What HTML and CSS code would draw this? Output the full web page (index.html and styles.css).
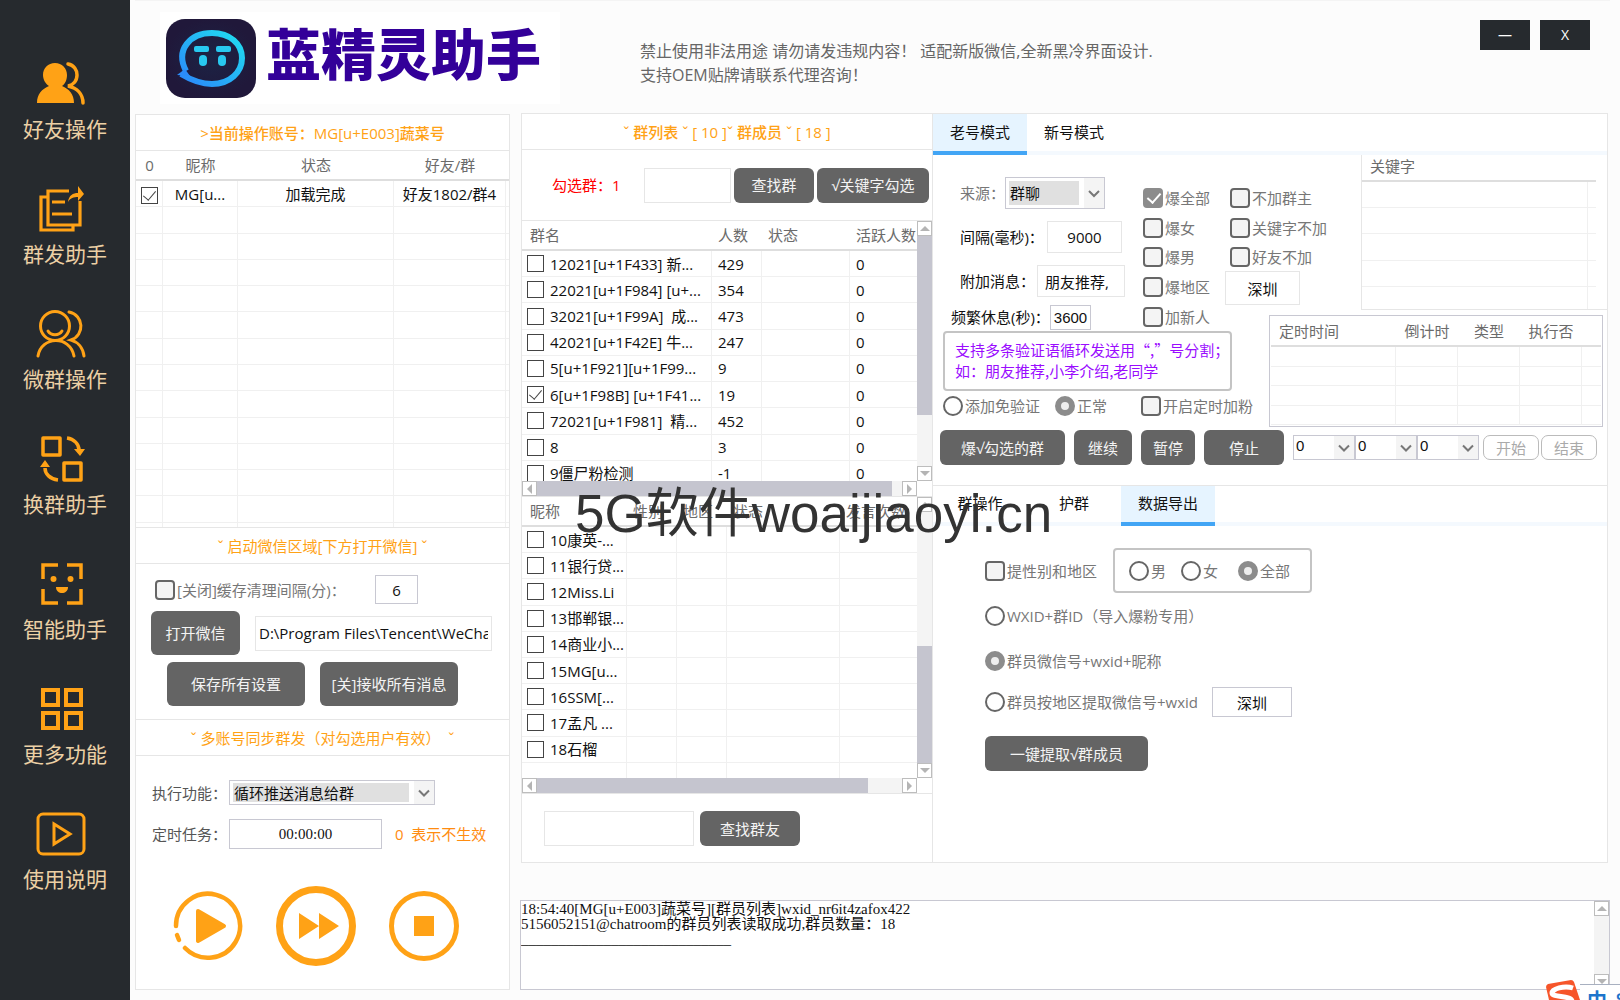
FILE: index.html
```html
<!DOCTYPE html>
<html lang="zh-CN">
<head>
<meta charset="utf-8">
<title>蓝精灵助手</title>
<link rel="stylesheet" href="styles.css">
</head>
<body>
<div class="app">
  <nav class="sidebar">
    <a href="#friends" class="nav-item">
      <svg viewBox="0 0 50 50"><g fill="#ffa216"><path d="M19 4c7 0 12 5 12 12 0 5-2 9-5 11 7 3 12 8 12 17H1c0-9 5-14 12-17-3-2-6-6-6-11C7 9 12 4 19 4z"/></g><path d="M32 5c6 1 9 6 9 11 0 6-4 10-9 11 9 2 15 8 15 17" fill="none" stroke="#ffa216" stroke-width="3.5" stroke-linecap="round"/></svg>
      <span>好友操作</span></a>
    <a href="#mass" class="nav-item">
      <svg viewBox="0 0 50 50" fill="none" stroke="#ffa216" stroke-width="3.2"><path d="M33 7H12v34h32V17M12 13H5v33h32v-5M16 18h13M16 30h20"/><path d="M32 18c1-7 5-9 10-9V2l6 8-6 7v-4c-4 0-8 1-10 5z" fill="#ffa216" stroke="none"/></svg>
      <span>群发助手</span></a>
    <a href="#groups" class="nav-item">
      <svg viewBox="0 0 50 50" fill="none" stroke="#ffa216" stroke-width="3" stroke-linecap="round"><circle cx="19" cy="17" r="14.500"/><path d="M12 22c3 5 11 5 14 0M2 47c3-20 32-21 36 0M33 3c15 3 16 23 2 28 7 2 12 8 13 16"/></svg>
      <span>微群操作</span></a>
    <a href="#swap" class="nav-item">
      <svg viewBox="0 0 50 50" fill="none" stroke="#ffa216" stroke-width="3.500" stroke-linejoin="round"><rect x="7" y="4" width="17" height="17"/><rect x="28" y="29" width="17" height="17"/><path d="M31 4c7 1 12 6 12 12M22 46C14 45 9 40 9 34"/><path d="M38 15h11l-5 7zM4 33h10l-5-7z" fill="#ffa216" stroke="none"/></svg>
      <span>换群助手</span></a>
    <a href="#smart" class="nav-item">
      <svg viewBox="0 0 50 50" fill="none" stroke="#ffa216" stroke-width="3.500"><path d="M22 6H7v14M31 6h14v14M7 30v14h15M45 30v14H31"/><g fill="#ffa216" stroke="none"><circle cx="17.500" cy="20" r="3"/><circle cx="34.500" cy="20" r="3"/><path d="M20 28h12c0 8-12 8-12 0z"/></g></svg>
      <span>智能助手</span></a>
    <a href="#more" class="nav-item">
      <svg viewBox="0 0 50 50" fill="none" stroke="#ffa216" stroke-width="4"><path d="M7 6h15v15H7zM30 6h15v15H30zM7 29h15v15H7zM30 29h15v15H30z"/></svg>
      <span>更多功能</span></a>
    <a href="#help" class="nav-item">
      <svg viewBox="0 0 50 50" fill="none" stroke="#ffa216" stroke-width="3"><rect x="2" y="5" width="46" height="40" rx="5"/><path d="M18 15v20l16-10z"/></svg>
      <span>使用说明</span></a>
  </nav>

  <main class="main">
    <header class="topbar">
      <div class="brand">
        <svg viewBox="0 0 90 79" width="90" height="79">
          <defs><linearGradient id="g" x1="0" y1="1" x2="1" y2="0"><stop offset="0" stop-color="#2b86fb"/><stop offset="1" stop-color="#20dff0"/></linearGradient>
          <radialGradient id="b"><stop offset="0" stop-color="#1c2345"/><stop offset="1" stop-color="#20183a"/></radialGradient></defs>
          <rect width="90" height="79" rx="19" fill="url(#b)"/>
          <path d="M20 52C9 31 24 14 46 14c18 0 30 11 30 25S64 65 46 65c-12 0-21-4-31-10" fill="none" stroke="url(#g)" stroke-width="6"/>
          <path d="M11 56l8-6 5 7z" fill="#2b8cfa"/>
          <g fill="#28c8f0"><rect x="28" y="27" width="15" height="6" rx="2"/><rect x="50" y="27" width="15" height="6" rx="2"/><rect x="33" y="36" width="8" height="11" rx="4"/><rect x="52" y="36" width="8" height="11" rx="4"/></g>
        </svg>
        <h1>蓝精灵助手</h1>
      </div>
      <p class="notice">禁止使用非法用途 请勿请发违规内容！ 适配新版微信,全新黑冷界面设计.<br>支持OEM贴牌请联系代理咨询！</p>
      <div class="win-buttons"><button aria-label="最小化">—</button><button aria-label="关闭">X</button></div>
    </header>

    <div class="content">
      <section class="account">
        <h2 class="strong">&gt;当前操作账号：MG[u+E003]蔬菜号</h2>
        <div class="grid-wrap">
          <table class="list accounts">
            <colgroup><col class="w27"><col class="w75"><col class="w156"><col class="w112"><col></colgroup>
            <thead><tr><th>0</th><th>昵称</th><th>状态</th><th>好友/群</th><th></th></tr></thead>
            <tbody>
              <tr><td><input type="checkbox" class="sq" checked aria-label="选择账号"></td><td>MG[u...</td><td>加载完成</td><td>好友1802/群4</td><td></td></tr>
              <tr><td></td><td></td><td></td><td></td><td></td></tr>
              <tr><td></td><td></td><td></td><td></td><td></td></tr>
              <tr><td></td><td></td><td></td><td></td><td></td></tr>
              <tr><td></td><td></td><td></td><td></td><td></td></tr>
              <tr><td></td><td></td><td></td><td></td><td></td></tr>
              <tr><td></td><td></td><td></td><td></td><td></td></tr>
              <tr><td></td><td></td><td></td><td></td><td></td></tr>
              <tr><td></td><td></td><td></td><td></td><td></td></tr>
              <tr><td></td><td></td><td></td><td></td><td></td></tr>
              <tr><td></td><td></td><td></td><td></td><td></td></tr>
              <tr><td></td><td></td><td></td><td></td><td></td></tr>
              <tr><td></td><td></td><td></td><td></td><td></td></tr>
              <tr><td></td><td></td><td></td><td></td><td></td></tr>
            </tbody>
          </table>
        </div>
        <h2 class="ruled">ˇ 启动微信区域[下方打开微信] ˇ</h2>
        <div class="launch">
          <div class="row cache"><label class="opt"><input type="checkbox" class="cb">[关闭]缓存清理间隔(分)：</label><input type="text" class="box n43" value="6" aria-label="缓存清理间隔"></div>
          <div class="row"><button class="btn tall w89">打开微信</button><input type="text" class="box pale path" value="D:\Program Files\Tencent\WeChat\WeChat.exe" aria-label="微信路径"></div>
          <div class="row pair"><button class="btn tall">保存所有设置</button><button class="btn tall">[关]接收所有消息</button></div>
        </div>
        <h2 class="ruled">ˇ 多账号同步群发（对勾选用户有效）&nbsp; ˇ</h2>
        <div class="sync">
          <div class="row"><label class="lb77" for="fn">执行功能：</label><div class="combo fn"><select id="fn"><option>循环推送消息给群</option></select><svg viewBox="0 0 20 20"><path d="M5 8l5 5 5-5"/></svg></div></div>
          <div class="row timer"><label class="lb77" for="tm">定时任务：</label><input type="text" id="tm" class="box tm" value="00:00:00"><span class="tip">0&nbsp; 表示不生效</span></div>
          <div class="player">
            <button aria-label="开始"><svg width="70" height="70" viewBox="0 0 70 70"><path d="M3 35A32 32 0 1 1 12 57" fill="none" stroke="#ffa216" stroke-width="4.500" stroke-linecap="round"/><path d="M4 44l2 5" stroke="#ffa216" stroke-width="4.500" stroke-linecap="round"/><path d="M25 20l26 15-26 15z" fill="#ffa216" stroke="#ffa216" stroke-width="4" stroke-linejoin="round"/></svg></button>
            <button aria-label="快进"><svg width="80" height="80" viewBox="0 0 80 80"><circle cx="40" cy="40" r="36.500" fill="none" stroke="#ffa216" stroke-width="7"/><path d="M23 27l20 13-20 13zM43 27l20 13-20 13z" fill="#ffa216"/></svg></button>
            <button aria-label="停止"><svg width="70" height="70" viewBox="0 0 70 70"><circle cx="35" cy="35" r="32.500" fill="none" stroke="#ffa216" stroke-width="5"/><path d="M25 25h20v20H25z" fill="#ffa216"/></svg></button>
          </div>
        </div>
      </section>

      <div class="work">
        <div class="panels">
          <section class="groups">
            <h2 class="strong">ˇ 群列表 ˇ [ 10 ]ˇ 群成员 ˇ [ 18 ]</h2>
            <div class="find"><label for="fg">勾选群：1</label><input type="text" id="fg" class="box pale h35 w87"><button class="btn w80">查找群</button><button class="btn w112">√关键字勾选</button></div>

            <div class="scroller group-scroller">
              <div class="viewport">
                <table class="list names group-table">
                  <colgroup><col class="w190"><col class="w50"><col class="w88"><col></colgroup>
                  <thead><tr><th>群名</th><th>人数</th><th>状态</th><th>活跃人数</th></tr></thead>
                  <tbody>
                    <tr><td><label><input type="checkbox" class="sq">12021[u+1F433] 新...</label></td><td>429</td><td></td><td>0</td></tr>
                    <tr><td><label><input type="checkbox" class="sq">22021[u+1F984] [u+...</label></td><td>354</td><td></td><td>0</td></tr>
                    <tr><td><label><input type="checkbox" class="sq">32021[u+1F99A]&nbsp; 成...</label></td><td>473</td><td></td><td>0</td></tr>
                    <tr><td><label><input type="checkbox" class="sq">42021[u+1F42E] 牛...</label></td><td>247</td><td></td><td>0</td></tr>
                    <tr><td><label><input type="checkbox" class="sq">5[u+1F921][u+1F99...</label></td><td>9</td><td></td><td>0</td></tr>
                    <tr><td><label><input type="checkbox" class="sq" checked>6[u+1F98B] [u+1F41...</label></td><td>19</td><td></td><td>0</td></tr>
                    <tr><td><label><input type="checkbox" class="sq">72021[u+1F981]&nbsp; 精...</label></td><td>452</td><td></td><td>0</td></tr>
                    <tr><td><label><input type="checkbox" class="sq">8</label></td><td>3</td><td></td><td>0</td></tr>
                    <tr><td><label><input type="checkbox" class="sq">9僵尸粉检测</label></td><td>-1</td><td></td><td>0</td></tr>
                  </tbody>
                </table>
              </div>
              <div class="bar v"><button class="up" aria-label="向上"></button><i class="thumb g-v"></i><button class="down" aria-label="向下"></button></div>
              <div class="bar h"><button class="left" aria-label="向左"></button><i class="thumb g-h"></i><button class="right" aria-label="向右"></button></div>
            </div>

            <div class="scroller member-scroller">
              <div class="viewport">
                <table class="list names member-table">
                  <colgroup><col class="w105"><col class="w50"><col class="w50"><col class="w113"><col></colgroup>
                  <thead><tr><th>昵称</th><th>性别</th><th>地区</th><th>状态</th><th>发言次数</th></tr></thead>
                  <tbody>
                    <tr><td><label><input type="checkbox" class="sq">10康英-...</label></td><td></td><td></td><td></td><td></td></tr>
                    <tr><td><label><input type="checkbox" class="sq">11银行贷...</label></td><td></td><td></td><td></td><td></td></tr>
                    <tr><td><label><input type="checkbox" class="sq">12Miss.Li</label></td><td></td><td></td><td></td><td></td></tr>
                    <tr><td><label><input type="checkbox" class="sq">13邯郸银...</label></td><td></td><td></td><td></td><td></td></tr>
                    <tr><td><label><input type="checkbox" class="sq">14商业小...</label></td><td></td><td></td><td></td><td></td></tr>
                    <tr><td><label><input type="checkbox" class="sq">15MG[u...</label></td><td></td><td></td><td></td><td></td></tr>
                    <tr><td><label><input type="checkbox" class="sq">16SSM[...</label></td><td></td><td></td><td></td><td></td></tr>
                    <tr><td><label><input type="checkbox" class="sq">17孟凡 ...</label></td><td></td><td></td><td></td><td></td></tr>
                    <tr><td><label><input type="checkbox" class="sq">18石榴</label></td><td></td><td></td><td></td><td></td></tr>
                    <tr><td></td><td></td><td></td><td></td><td></td></tr>
                  </tbody>
                </table>
              </div>
              <div class="bar v"><button class="up" aria-label="向上"></button><i class="space"></i><i class="thumb m-v"></i><button class="down" aria-label="向下"></button></div>
              <div class="bar h"><button class="left" aria-label="向左"></button><i class="thumb m-h"></i><button class="right" aria-label="向右"></button></div>
            </div>
            <div class="find-member"><input type="text" class="box pale h35 w150" aria-label="群友昵称"><button class="btn w100">查找群友</button></div>
          </section>

          <section class="tools">
            <div class="tabs"><button class="on">老号模式</button><button>新号模式</button></div>
            <div class="mode">
              <div class="mode-top">
                <div class="fields">
                  <div class="row"><label for="src" class="soft lb45">来源：</label><div class="combo src"><select id="src"><option>群聊</option></select><svg viewBox="0 0 20 20"><path d="M5 8l5 5 5-5"/></svg></div></div>
                  <div class="row"><label for="gap" class="lb87">间隔(毫秒)：</label><input type="text" id="gap" class="box pale h32 w75" value="9000"></div>
                  <div class="row"><label for="msg" class="lb77">附加消息：</label><input type="text" id="msg" class="box pale h32 w88 msg" value="朋友推荐,"></div>
                </div>
                <div class="checks">
                  <label class="opt"><input type="checkbox" class="cb" checked>爆全部</label><label class="opt in"><input type="checkbox" class="cb">不加群主</label>
                  <label class="opt"><input type="checkbox" class="cb">爆女</label><label class="opt in"><input type="checkbox" class="cb">关键字不加</label>
                  <label class="opt"><input type="checkbox" class="cb">爆男</label><label class="opt in"><input type="checkbox" class="cb">好友不加</label>
                  <label class="opt"><input type="checkbox" class="cb">爆地区</label><input type="text" class="box pale w75" value="深圳" aria-label="地区">
                </div>
              </div>
              <div class="keywords">
                <table class="list kw">
                  <colgroup><col><col class="w8"></colgroup>
                  <thead><tr><th colspan="2">关键字</th></tr></thead>
                  <tbody><tr><td></td><td></td></tr><tr><td></td><td></td></tr><tr><td></td><td></td></tr><tr><td></td><td></td></tr><tr><td></td><td></td></tr></tbody>
                </table>
              </div>
              <div class="mode-left">
                <div class="row rest"><label for="rest" class="lb99">频繁休息(秒)：</label><input type="text" id="rest" class="box arial n41" value="3600"><label class="opt"><input type="checkbox" class="cb">加新人</label></div>
                <p class="hint">支持多条验证语循环发送用“,”号分割；<br>如：朋友推荐,小李介绍,老同学</p>
                <div class="row verify"><label class="opt w112"><input type="radio" name="vf" class="rd">添加免验证</label><label class="opt w86"><input type="radio" name="vf" class="rd" checked>正常</label><label class="opt"><input type="checkbox" class="cb">开启定时加粉</label></div>
              </div>
              <div class="schedule">
                <table class="list sch">
                  <colgroup><col class="w125"><col class="w62"><col class="w62"><col class="w62"><col></colgroup>
                  <thead><tr><th>定时时间</th><th>倒计时</th><th>类型</th><th>执行否</th><th></th></tr></thead>
                  <tbody><tr><td></td><td></td><td></td><td></td><td></td></tr><tr><td></td><td></td><td></td><td></td><td></td></tr><tr><td></td><td></td><td></td><td></td><td></td></tr><tr><td></td><td></td><td></td><td></td><td></td></tr></tbody>
                </table>
              </div>
            </div>
            <div class="actions">
              <button class="btn w125">爆√勾选的群</button><button class="btn w58">继续</button><button class="btn w54">暂停</button><button class="btn w80">停止</button>
              <div class="when">
                <div class="combo num"><select aria-label="时"><option>0</option></select><svg viewBox="0 0 20 20"><path d="M5 8l5 5 5-5"/></svg></div>
                <div class="combo num"><select aria-label="分"><option>0</option></select><svg viewBox="0 0 20 20"><path d="M5 8l5 5 5-5"/></svg></div>
                <div class="combo num"><select aria-label="秒"><option>0</option></select><svg viewBox="0 0 20 20"><path d="M5 8l5 5 5-5"/></svg></div>
                <button class="ghost">开始</button><button class="ghost">结束</button>
              </div>
            </div>
            <div class="tabs second"><button>群操作</button><button>护群</button><button class="on">数据导出</button></div>
            <div class="export">
              <div class="row"><label class="opt w128"><input type="checkbox" class="cb">提性别和地区</label>
                <div class="sex"><label class="opt"><input type="radio" name="sex" class="rd">男</label><label class="opt"><input type="radio" name="sex" class="rd">女</label><label class="opt"><input type="radio" name="sex" class="rd" checked>全部</label></div></div>
              <div class="row line"><label class="opt"><input type="radio" name="ex" class="rd">WXID+群ID（导入爆粉专用）</label></div>
              <div class="row line"><label class="opt"><input type="radio" name="ex" class="rd" checked>群员微信号+wxid+昵称</label></div>
              <div class="row last"><label class="opt w227"><input type="radio" name="ex" class="rd">群员按地区提取微信号+wxid</label><input type="text" class="box w80 h30" value="深圳" aria-label="提取地区"></div>
              <button class="btn w163">一键提取√群成员</button>
            </div>
          </section>
        </div>

        <div class="log">
          <textarea aria-label="日志" readonly>18:54:40[MG[u+E003]蔬菜号][群员列表]wxid_nr6it4zafox422
5156052151@chatroom的群员列表读取成功,群员数量：18
____________________________</textarea>
          <div class="bar v"><button class="up" aria-label="向上"></button><i class="space"></i><button class="down" aria-label="向下"></button></div>
        </div>
      </div>
    </div>
  </main>
</div>

<div class="watermark">5G软件woaijiaoyi.cn</div>
<div class="ime">
  <svg width="34" height="20" viewBox="0 0 34 20"><path d="M0 7Q0 5 2 4L25 0q2 0 3 2l6 18H3z" fill="#f6552a"/><path d="M27 8C18 5 6 9 6 13c0 5 19 2 20 8" fill="none" stroke="#fff" stroke-width="5"/></svg>
  <div class="ime-bar"><b>中</b><b>°,</b></div>
</div>
</body>
</html>
```
FILE: styles.css
```css
* { box-sizing: border-box; }
body {
  margin: 0;
  font: 15px/20px "Open Sans", "Noto Sans CJK SC", sans-serif;
  color: #111;
  background: #fcfcfc;
}
button, input, select, textarea { font: inherit; color: inherit; margin: 0; }
button { cursor: pointer; white-space: nowrap; }
.app { display: flex; min-height: 100vh; }

/* Sidebar */
.sidebar {
  flex: none;
  width: 130px;
  padding-top: 59px;
  display: flex;
  flex-direction: column;
  gap: 40px;
  background: #262a2e;
}
.nav-item {
  display: flex;
  flex-direction: column;
  align-items: center;
  gap: 5px;
  color: #ecd0a5;
  font-size: 21px;
  line-height: 30px;
  text-decoration: none;
}
.nav-item svg { width: 50px; height: 50px; margin-right: 8px; }

/* Header */
.main { flex: 1; min-width: 0; display: flex; flex-direction: column; padding: 0 10px 10px 5px; }
.topbar { height: 113px; display: flex; align-items: flex-start; padding-left: 25px; border-top: 1px solid #f4f4f4; }
.brand { display: flex; align-items: center; gap: 10px; width: 400px; height: 92px; margin-top: 11px; padding: 0 0 0 6px; background: #fff; }
.brand h1 { margin: 0; font-size: 55px; line-height: 70px; font-weight: 900; color: #309; white-space: nowrap; padding-bottom: 9px; }
.notice { margin: 38px 0 0 80px; font-size: 16px; line-height: 24px; color: #666; }
.win-buttons { display: flex; gap: 10px; margin: 19px 20px 0 auto; }
.win-buttons button { width: 50px; height: 30px; padding: 0; border: 0; background: #262a2e; color: #fff; font-size: 14px; }

.content { flex: 1; display: flex; gap: 10px; }
.account { width: 375px; margin-top: 1px; display: flex; flex-direction: column; border: 1px solid #e6e6e6; background: #fff; }
.work { flex: 1; min-width: 0; display: flex; flex-direction: column; }
.panels { display: flex; margin: 0 2px 0 1px; border: 1px solid #e6e6e6; background: #fff; }

h2 {
  flex: none;
  margin: 0;
  height: 36px;
  border-bottom: 1px solid #e6e6e6;
  font-size: 15px;
  line-height: 36px;
  font-weight: 400;
  color: #ffa216;
  text-align: center;
  white-space: pre;
}
h2.strong { font-weight: 500; }
h2.ruled { height: 37px; border-top: 1px solid #e6e6e6; }

/* Tables */
.list { width: 100%; table-layout: fixed; border-collapse: separate; border-spacing: 0; }
.list tbody tr { height: 26px; }
.list th { height: 30px; padding: 0 0 0 6px; border-bottom: 2px solid #dedede; font-weight: 400; color: #6b6b6b; text-align: left; white-space: nowrap; }
.list td { padding: 0 0 0 6px; border-right: 1px solid #f0f0f0; border-bottom: 1px solid #f0f0f0; white-space: nowrap; line-height: 20px; }
.list td:last-child { border-right: 0; }
.list label { display: flex; align-items: center; gap: 6px; }
.names th:first-child { padding-left: 8px; }
.names td:first-child { padding-left: 5px; }
.grid-wrap { flex: 1 1 0; min-height: 375px; overflow: hidden; }
.accounts { height: 398px; }
.list.accounts th, .list.accounts td { text-align: center; padding: 0; }
.w27 { width: 27px; } .w75 { width: 75px; } .w156 { width: 156px; } .w112 { width: 112px; }
.w190 { width: 190px; } .w50 { width: 50px; } .w88 { width: 88px; } .w105 { width: 105px; }
.w113 { width: 113px; } .w8 { width: 8px; } .w125 { width: 125px; } .w62 { width: 62px; }

/* Form controls */
.sq, .cb, .rd { appearance: none; flex: none; position: relative; background: #fff; }
.sq { width: 17px; height: 17px; border: 1px solid #444; vertical-align: middle; }
.sq:checked::before { content: ""; position: absolute; left: 4px; top: 0; width: 6px; height: 11px; border: solid #444; border-width: 0 1px 1px 0; transform: rotate(40deg); }
.cb { width: 20px; height: 20px; border: 2px solid #666; border-radius: 4px; background: #f4f4f4; }
.cb:checked { background: #8c8c8c; border-color: #8c8c8c; }
.cb:checked::before { content: ""; position: absolute; left: 5px; top: 0; width: 6px; height: 11px; border: solid #fff; border-width: 0 2px 2px 0; transform: rotate(42deg); }
.rd { width: 20px; height: 20px; border: 2px solid #666; border-radius: 50%; }
.rd:checked { border: 6px solid #8c8c8c; background: #eee; }
.opt { display: flex; align-items: center; gap: 2px; color: #777; white-space: nowrap; }
.row { display: flex; align-items: center; }
.row label { flex: none; white-space: nowrap; }
.box { border: 1px solid #c8c8d2; background: #fff; padding: 0 3px; text-align: center; border-radius: 0; height: 29px; }
.box.pale { border-color: #e6e6e6; }
.box.h35 { height: 35px; } .box.h32 { height: 32px; } .box.h30 { height: 30px; }
.btn { height: 35px; padding: 0; border: 0; border-radius: 6px; background: #646464; color: #f4f4f4; }
.btn.tall { height: 44px; }
.w89 { width: 89px; } .w87 { width: 87px; } .w80 { width: 80px; } .w150 { width: 150px; } .w100 { width: 100px; }
.w128 { width: 128px; } .w227 { width: 227px; } .w163 { width: 163px; } .w86 { width: 86px; } .w58 { width: 58px; } .w54 { width: 54px; }
.n43 { width: 43px; } .n41 { width: 41px; }
.lb77 { width: 77px; } .lb45 { width: 45px; } .lb87 { width: 87px; } .lb99 { width: 99px; }
.soft { color: #777; }
.combo { display: flex; border: 1px solid #c8c8d2; background: #fff; }
.combo select { flex: 1; min-width: 0; appearance: none; border: 0; border-radius: 0; padding: 0 1px; margin: 3px 5px 3px 3px; background: #e0e0e0; }
.combo svg { width: 20px; height: auto; background: #f4f4f4; fill: none; stroke: #777; stroke-width: 2; pointer-events: none; }
.combo.fn { width: 206px; height: 25px; }
.combo.fn select { line-height: 18px; margin: 2px 5px 2px 3px; }
.combo.src { width: 100px; height: 32px; }
.combo.num { width: 62px; height: 25px; }
.combo.num select { background: #fff; margin: 0 0 5px 1px; font-family: "Liberation Sans", sans-serif; }

/* Left panel sections */
.launch { padding: 11px 15px 13px; display: flex; flex-direction: column; gap: 7px; }
.launch .row { gap: 15px; }
.launch .cache { gap: 0; padding-left: 4px; }
.cache .opt { width: 220px; }
.path { flex: 1; min-width: 0; height: 35px; text-align: left; }
.launch .row:nth-child(2) { padding-right: 2px; }
.launch .pair { padding: 0 36px 0 16px; }
.pair .btn { flex: 1; }
.sync { padding: 24px 16px 23px; color: #555; }
.sync .combo, .sync .box { color: #111; }
.sync .timer { margin-top: 14px; }
.tm { width: 153px; height: 30px; font-family: "Liberation Serif", serif; }
.tip { margin-left: 13px; color: #ff8c10; }
.player { display: flex; align-items: center; gap: 33px; margin-top: 37px; padding-left: 21px; }
.player button { padding: 0; border: 0; background: none; }
.player svg { display: block; }

/* Group lists */
.groups { flex: none; width: 411px; border-right: 1px solid #e6e6e6; display: flex; flex-direction: column; }
.find { display: flex; align-items: center; gap: 3px; height: 71px; padding-left: 30px; border-bottom: 1px solid #e6e6e6; }
.find label { width: 89px; color: #f00; }
.scroller { display: grid; grid-template: 1fr 15px / 1fr 15px; }
.viewport { overflow: hidden; }
.group-scroller { height: 275px; }
.member-scroller { height: 297px; border-top: 1px solid #e6e6e6; }
.group-table { height: 266px; }
.member-table { height: 292px; }
.bar { display: flex; background: #f4f4f4; }
.bar.v { flex-direction: column; width: 15px; }
.bar button { flex: none; width: 15px; height: 15px; padding: 0; border: 1px solid #bdbdbd; background: #fff; display: grid; place-items: center; }
.bar button::before { content: ""; border: 5px solid transparent; }
.bar .up::before { border-top: 0; border-bottom-color: #b4b4b4; }
.bar .down::before { border-bottom: 0; border-top-color: #b4b4b4; }
.bar .left::before { border-left: 0; border-right-color: #b4b4b4; }
.bar .right::before { border-right: 0; border-left-color: #b4b4b4; }
.bar .down { margin-top: auto; }
.bar .right { margin-left: auto; }
.thumb { background: #c5c5cf; }
.space { flex: 1; }
.g-v { height: 179px; } .g-h { width: 355px; }
.m-v { height: 117px; } .m-h { width: 331px; }
.find-member { display: flex; gap: 6px; padding: 17px 22px 16px; border-top: 1px solid #e6e6e6; }

/* Right tools */
.tools { flex: 1; min-width: 0; }
.tabs { display: flex; height: 41px; border-bottom: 4px solid #f4f9fe; }
.tabs button { width: 94px; height: 41px; padding: 0 0 2px; border: 0; border-bottom: 4px solid transparent; background: none; }
.tabs .on { background: #e6f4ff; border-bottom-color: #42a5f5; }
.tabs.second { border-top: 1px solid #e6e6e6; }
.tabs.second button { height: 40px; }
.mode { display: grid; grid-template-columns: 336px 92px 1fr; grid-template-rows: 148px 7px 117px; }
.mode-top { grid-area: 1 / 1 / 2 / 3; display: flex; padding-left: 27px; }
.fields { width: 183px; padding-top: 22px; display: flex; flex-direction: column; gap: 12px; }
.msg { text-align: left; padding-left: 7px; }
.checks { display: grid; grid-template: 30px 30px 28px 32px / 82px 110px; padding-top: 28px; }
.checks .box { height: 34px; }
.opt.in { padding-left: 5px; }
.keywords { grid-area: 1 / 3 / 3 / 4; border-left: 1px solid #e6e6e6; border-bottom: 1px solid #e6e6e6; padding-right: 11px; overflow: hidden; }
.kw { height: 158px; }
.list.kw th { height: 27px; padding: 0 0 3px 8px; }
.mode-left { grid-area: 2 / 1 / 4 / 2; }
.rest { height: 28px; padding-left: 18px; }
.rest .box { height: 25px; padding: 0; margin-right: 52px; }
.arial { font-family: "Liberation Sans", sans-serif; }
.hint { margin: 0 0 0 10px; width: 289px; height: 60px; padding: 6px 0 0 10px; border: 2px solid #c4c4c4; border-radius: 4px; line-height: 21px; color: #9a0cff; white-space: nowrap; font-family: "Noto Sans CJK SC", sans-serif; }
.verify { height: 30px; padding-left: 10px; }
.schedule { grid-area: 3 / 2 / 4 / 4; margin: 5px 4px 0 0; padding: 1px; border: 1px solid #c8c8d2; }
.sch { height: 108px; }
.list.sch tbody tr { height: 19px; }
.list.sch td { line-height: 10px; }
.list.sch th { text-align: center; padding: 0; }
.list.sch th:first-child { text-align: left; padding-left: 8px; }
.actions { display: flex; align-items: center; gap: 9px; padding: 3px 0 20px 7px; }
.when { display: flex; align-items: center; }
.ghost { width: 56px; height: 25px; margin-left: 4px; padding: 0; border: 1px solid #bbb; border-radius: 7px; background: #fff; color: #aaa; line-height: 20px; }
.ghost + .ghost { margin-left: 2px; }
.export { padding: 22px 0 0 52px; }
.sex { display: flex; align-items: center; width: 199px; height: 45px; padding-left: 14px; border: 2px solid #c4c4c4; border-radius: 4px; gap: 15px; }
.sex .opt:last-child { margin-left: 5px; }
.line { height: 45px; }
.last { height: 38px; margin-bottom: 15px; }

/* Log */
.log { display: flex; flex: 1; margin-top: 37px; border: 1px solid #c8c8d2; background: #fff; }
.log textarea { flex: 1; padding: 1px 0; border: 0; resize: none; overflow: hidden; background: none; font: 15px/15px "Liberation Serif", "Noto Sans CJK SC", serif; color: #111; outline: 0; }

/* Overlays */
.watermark { position: absolute; left: 575px; top: 484px; font: 53px/60px "Liberation Sans", "Noto Sans CJK SC", sans-serif; color: #333; white-space: nowrap; pointer-events: none; }
.ime { position: fixed; right: 0; bottom: 0; width: 74px; height: 20px; display: flex; overflow: hidden; }
.ime svg { flex: none; }
.ime-bar { flex: 1; display: flex; gap: 9px; height: 16px; margin-top: 4px; padding-left: 7px; border-top: 1px solid #a8b0c0; background: #fff; overflow: hidden; }
.ime-bar b { font-size: 20px; line-height: 32px; color: #1c74cc; }
```
